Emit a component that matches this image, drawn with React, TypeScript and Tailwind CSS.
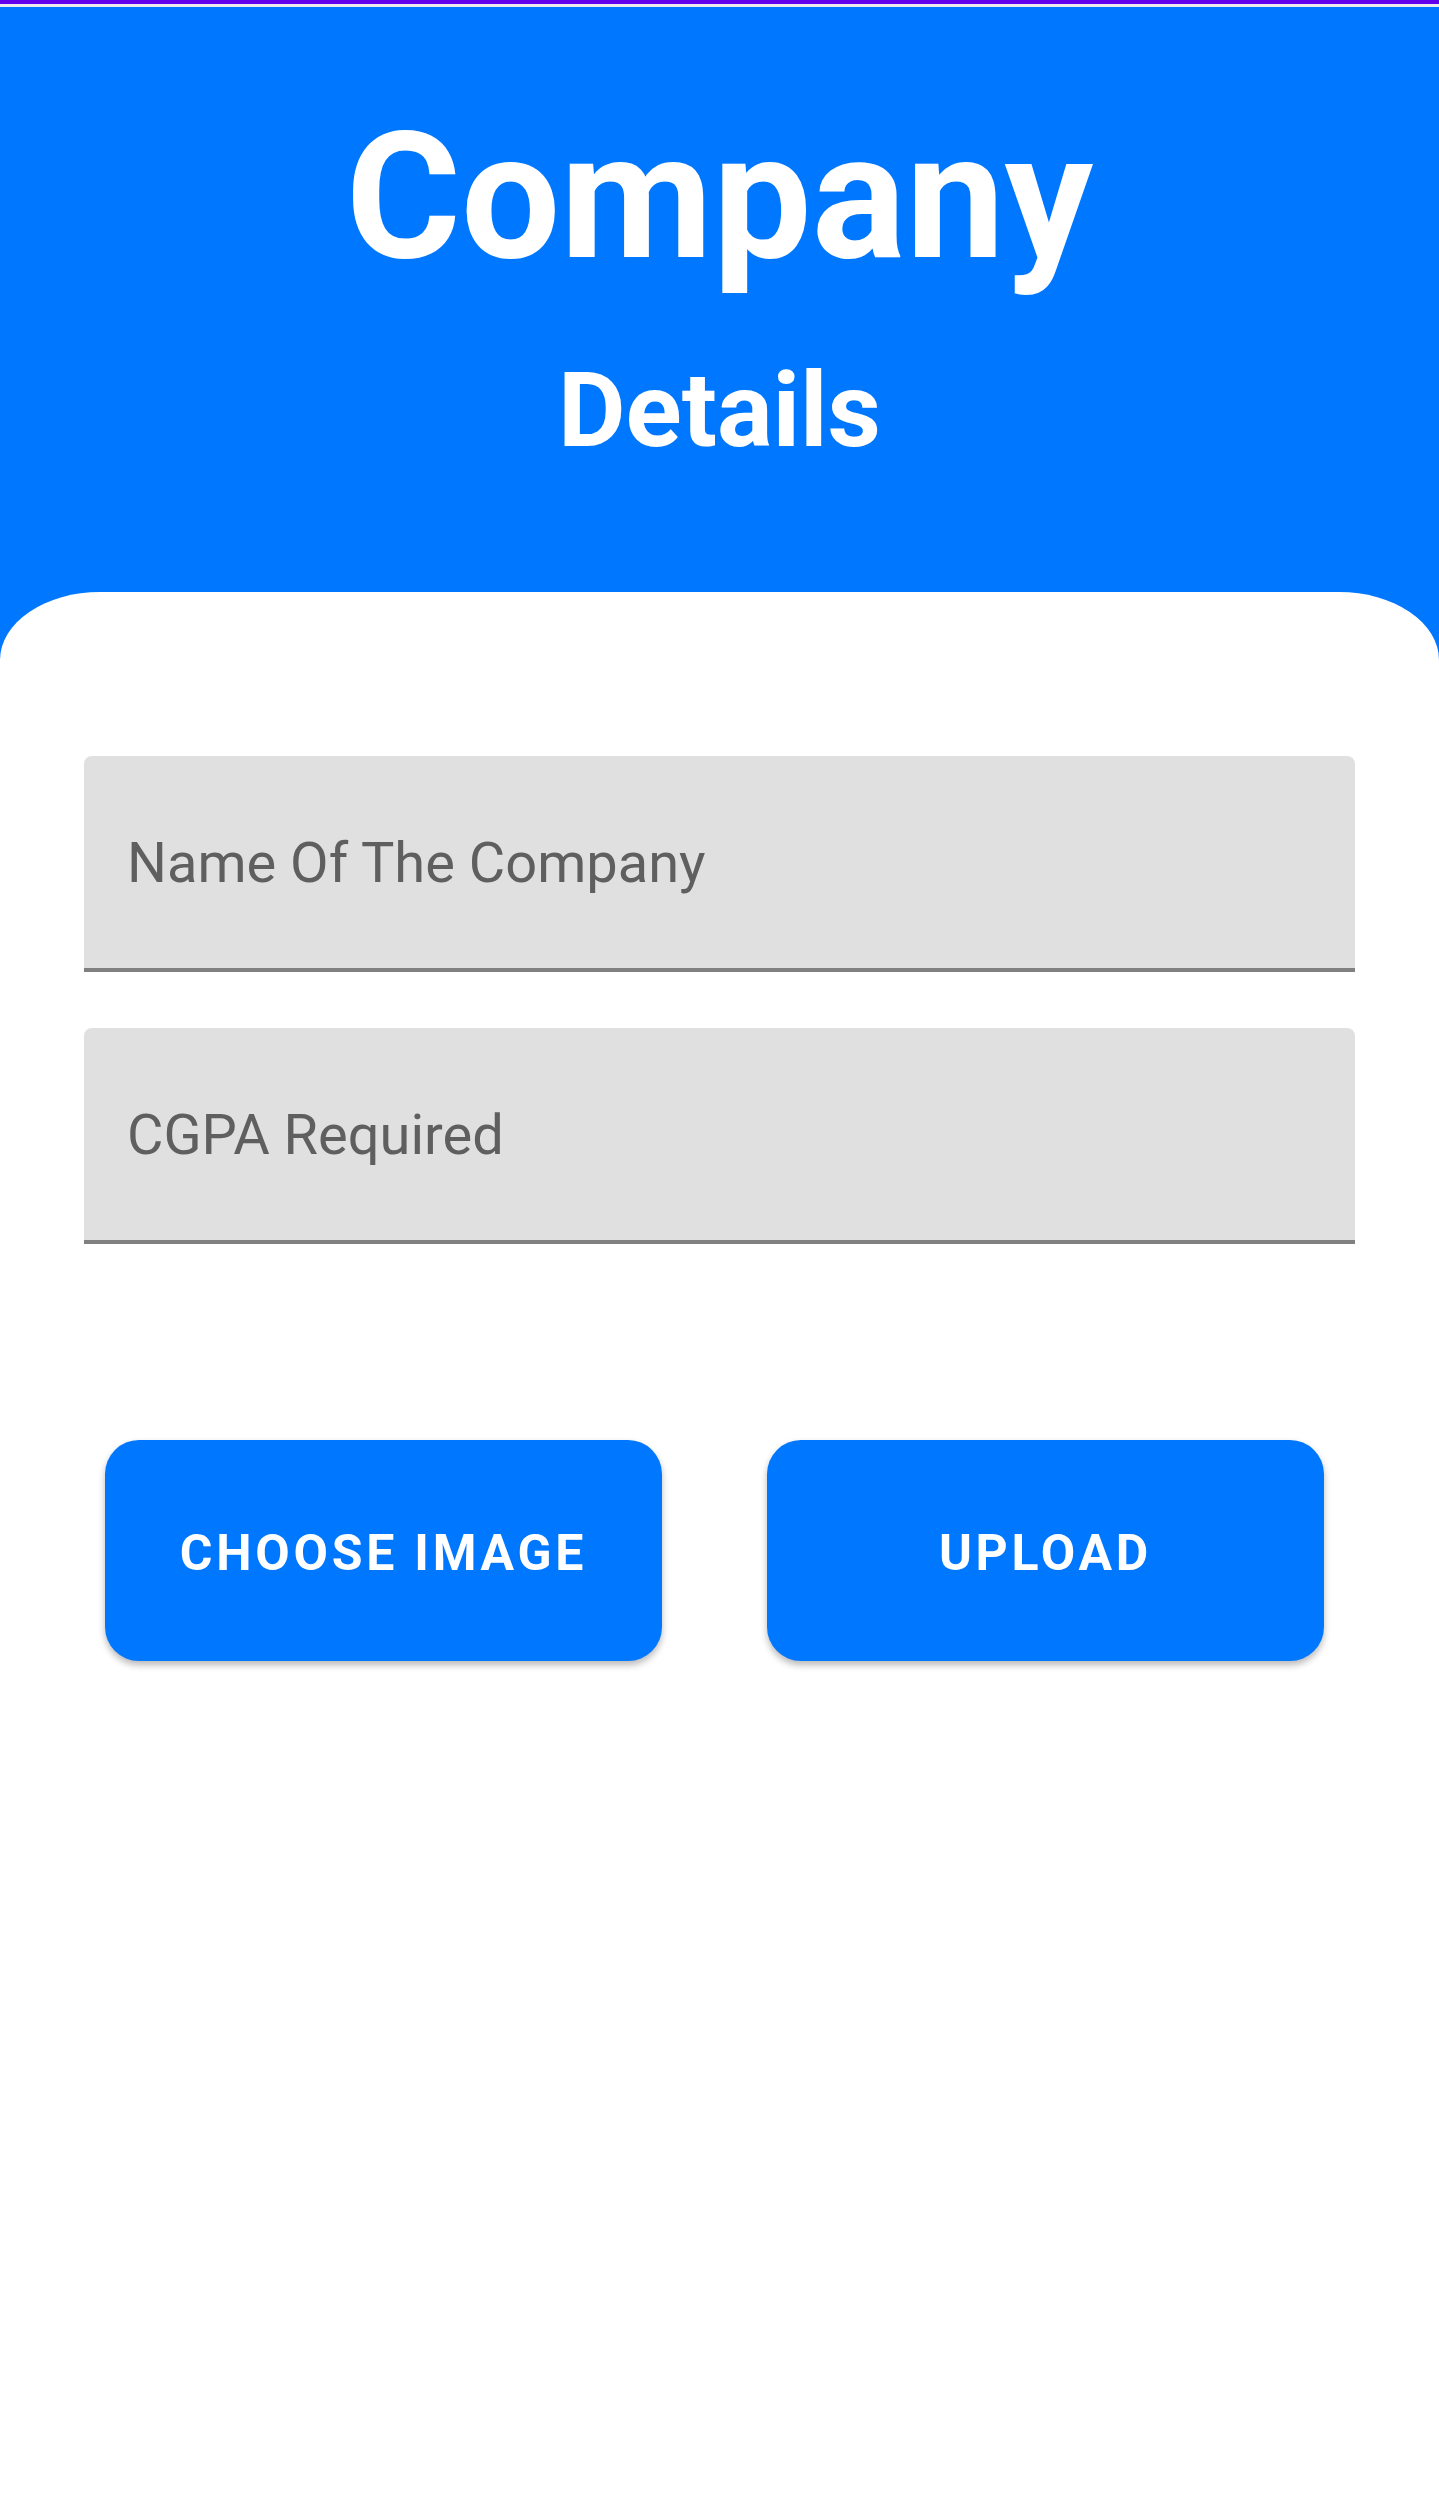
import React from 'react';

const fields = ['Name Of The Company', 'CGPA Required'];

export default function App() {
  return (
    <div className="min-h-screen flex flex-col bg-[#0077ff] font-['Roboto',sans-serif]">
      {/* status strip */}
      <div className="h-[4px] bg-[#6200ee]" />
      <div className="h-[3px] bg-[#ececec]" />

      {/* Header */}
      <header className="pt-[102px] pb-[129px] text-center text-white">
        <h1 className="text-[176px] font-bold leading-none">Company</h1>
        <h2 className="mt-[74px] text-[104px] font-bold leading-none">Details</h2>
      </header>

      {/* Form card */}
      <main className="flex-1 bg-white rounded-t-[100px_68px] px-[84px] pt-[164px]">
        <div className="flex flex-col gap-[56px]">
          {fields.map((label) => (
            <input
              key={label}
              type="text"
              placeholder={label}
              className="h-[216px] w-full rounded-t-[8px] bg-[#e0e0e0] border-b-[4px] border-[#808080] pl-[43px] pt-[2px] text-[56px] text-[#222] placeholder:text-[#5f5f5f] outline-none"
            />
          ))}
        </div>

        <div className="flex gap-[105px] pl-[21px] mt-[196px]">
          <button className="w-[557px] h-[221px] rounded-[34px] bg-[#0077ff] pt-[5px] text-white text-[50px] font-bold tracking-[0.075em] shadow-[0_4px_7px_rgba(0,0,0,0.28)]">
            CHOOSE IMAGE
          </button>
          <button className="w-[557px] h-[221px] rounded-[34px] bg-[#0077ff] pt-[5px] text-white text-[50px] font-bold tracking-[0.075em] shadow-[0_4px_7px_rgba(0,0,0,0.28)]">
            UPLOAD
          </button>
        </div>
      </main>
    </div>
  );
}
